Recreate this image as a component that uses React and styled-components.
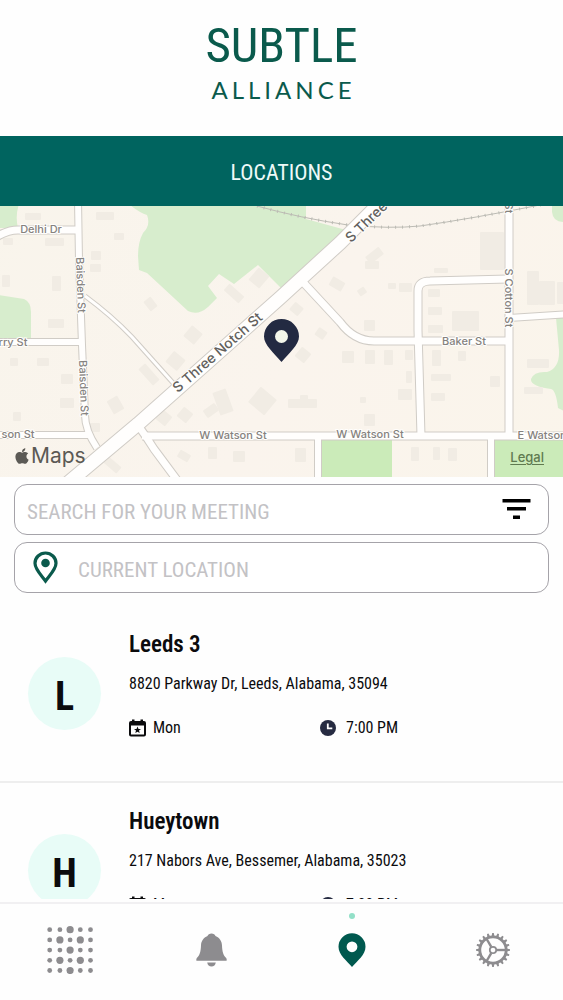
import React from "react";
import styled, { createGlobalStyle, css } from "styled-components";
import { FaApple } from "react-icons/fa";

const GlobalStyle = createGlobalStyle`
  *, *::before, *::after { box-sizing: border-box; }
  body {
    margin: 0;
    background: #fefefe;
    color: #0b0b0d;
    font-family: "Roboto Condensed", "Liberation Sans", sans-serif;
  }
  h1, h2, p, ul { margin: 0; padding: 0; }
  ul { list-style: none; }
`;

const Screen = styled.div`
  display: flex;
  flex-direction: column;
  height: 100vh;
  overflow: hidden;
`;

/* Brand header */
const Brand = styled.header`
  flex: none;
  display: flex;
  flex-direction: column;
  align-items: center;
  height: 136px;
  padding-top: 16px;
  color: #0a5a4c;
`;
const BrandName = styled.p`
  font-size: 49px;
  line-height: 60px;
`;
const BrandSub = styled.p`
  margin-right: -4px;
  font-family: Lato, sans-serif;
  font-size: 24px;
  line-height: 28px;
  letter-spacing: 4px;
`;

const TitleBar = styled.div`
  flex: none;
  display: flex;
  align-items: center;
  justify-content: center;
  height: 70px;
  padding-top: 4px;
  background: #00645f;
  color: #eefaf8;
`;
const Title = styled.h1`
  font-size: 22px;
  line-height: 28px;
  font-weight: 400;
`;

/* Map */
const MapPanel = styled.section`
  flex: none;
  position: relative;
  height: 271px;
  background: #f9f5ec;
`;
const MapArt = styled.svg`
  display: block;
  width: 100%;
  height: 100%;
  font-family: Inter, sans-serif;
`;
const MapBrand = styled.span`
  position: absolute;
  left: 13px;
  bottom: 8px;
  display: flex;
  align-items: center;
  font: 400 21px/26px Inter, sans-serif;
  color: #5c5a55;
`;
const LegalLink = styled.a`
  position: absolute;
  right: 19px;
  bottom: 11px;
  font: 500 13px/18px Inter, sans-serif;
  color: #5f7a50;
  text-underline-offset: 2px;
`;

/* Search fields */
const SearchForm = styled.form`
  flex: none;
  display: flex;
  flex-direction: column;
  gap: 7px;
  padding: 7px 14px 0;
`;
const Field = styled.div`
  display: flex;
  align-items: center;
  height: 51px;
  padding: 0 17px 0 ${(p) => (p.$withIcon ? "18px" : "12px")};
  gap: 20px;
  border: 1px solid #a5a3a9;
  border-radius: 13px;
  background: #fff;
`;
const FieldInput = styled.input`
  flex: 1;
  min-width: 0;
  padding: 4px 0 0;
  border: 0;
  outline: 0;
  background: none;
  color: #0b0b0d;
  font: 400 21px/28px "Roboto Condensed", "Liberation Sans", sans-serif;
  &::placeholder { color: #c3c2c5; opacity: 1; }
`;
const IconButton = styled.button`
  display: flex;
  padding: 0;
  border: 0;
  background: none;
  color: #000;
`;

/* Meeting list */
const MeetingList = styled.ul`
  flex: 1;
  min-height: 0;
  margin-bottom: 3px;
  padding-top: 13px;
  overflow: hidden;
`;
const Meeting = styled.li`
  display: flex;
  align-items: center;
  gap: 28px;
  height: 177px;
  padding: 0 28px;
  border-bottom: 2px solid #eeeeee;
`;
const Avatar = styled.span`
  flex: none;
  display: flex;
  align-items: center;
  justify-content: center;
  width: 73px;
  height: 73px;
  padding-top: 6px;
  border-radius: 50%;
  background: #e8fcf7;
  font-size: 40px;
  line-height: 44px;
  font-weight: 700;
`;
const Details = styled.div`
  flex: 1;
  min-width: 0;
  padding-bottom: 18px;
`;
const MeetingName = styled.h2`
  font-size: 23px;
  line-height: 28px;
  font-weight: 600;
`;
const Address = styled.p`
  margin-top: 14px;
  font-size: 16px;
  line-height: 22px;
`;
const Meta = styled.div`
  display: grid;
  grid-template-columns: 191px 1fr;
  margin-top: 22px;
`;
const MetaItem = styled.span`
  display: flex;
  align-items: center;
  gap: ${(p) => (p.$wide ? "10px" : "7px")};
  font-size: 16px;
  line-height: 22px;
`;

/* Bottom navigation */
const TabBar = styled.nav`
  flex: none;
  display: grid;
  grid-template-columns: repeat(4, 1fr);
  height: 98px;
  border-top: 2px solid #f1f0f2;
`;
const Tab = styled.button`
  position: relative;
  display: flex;
  align-items: center;
  justify-content: center;
  padding: 0 0 4px;
  border: 0;
  background: none;
  color: #8d8c8f;
  ${(p) =>
    p.$active &&
    css`
      color: #00594f;
      &::before {
        content: "";
        position: absolute;
        top: 9px;
        left: 50%;
        width: 6px;
        height: 6px;
        margin-left: -3px;
        border-radius: 50%;
        background: #93e0c8;
      }
    `}
`;

const roads = [
  { d: "M78 200 L79 260 L82 345 L85 415 Q85 430 97 448", w: 6 },
  { d: "M78 230 H18 Q8 230 -4 237", w: 7 },
  { d: "M-4 342 H82", w: 6 },
  { d: "M-4 435 H88", w: 6 },
  { d: "M85 296 Q112 316 132 337 L174 384", w: 3 },
  { d: "M137 424 Q146 436 154 449 L180 484", w: 7 },
  { d: "M142 436 H570", w: 7 },
  { d: "M301 280 L340 322 Q354 341 374 341 H508", w: 7 },
  { d: "M421 436 L418 330 V291 Q418 281 430 281 L508 279", w: 7 },
  { d: "M509 200 V436", w: 7 },
  { d: "M509 318 L570 314", w: 6 },
  { d: "M318 436 V484", w: 6 },
  { d: "M491 436 V484", w: 6 },
  { d: "M50 498 L138 424 L281 297 L340 243 L390 193", w: 13 },
];

const parks = [
  "M130 205 Q140 213 147 215 Q151 225 143 233 Q138 242 138 256 L139 270 L147 273 L188 311 Q198 316 208 307 L217 298 L208 286 L219 274 L234 284 L258 265 L281 288 L346 230 L306 219 V205 Z",
  "M-2 204 H19 Q15 216 18 228 H-2 Z",
  "M-2 295 L24 299 Q31 302 31 312 V339 H-2 Z",
  "M552 204 H566 V222 Q553 223 552 212 Z",
  "M556 318 H566 V412 L558 408 Q556 390 551 389 Q530 386 531 379 Q534 371 547 372 Q560 368 559 350 Z",
];

const buildings = [
  [25, 213, 16, 7], [96, 212, 18, 8], [45, 238, 19, 8], [3, 238, 10, 7], [114, 233, 10, 7], [91, 251, 10, 9],
  [90, 264, 11, 8], [52, 276, 9, 15], [2, 275, 8, 12], [48, 319, 16, 9], [10, 358, 8, 8], [37, 358, 12, 8],
  [61, 374, 12, 10], [60, 398, 14, 10], [13, 412, 8, 9], [365, 261, 14, 8], [434, 268, 14, 5], [399, 283, 13, 9],
  [388, 283, 8, 6], [364, 320, 11, 11], [428, 289, 12, 8], [428, 307, 14, 8], [428, 325, 15, 8], [452, 311, 27, 20],
  [480, 232, 24, 38], [527, 271, 12, 34], [539, 281, 16, 24], [557, 282, 8, 22], [365, 350, 10, 14], [384, 350, 9, 15],
  [342, 351, 12, 12], [405, 350, 8, 10], [406, 371, 6, 12], [398, 389, 14, 11], [432, 350, 9, 16], [458, 351, 8, 10],
  [431, 374, 20, 7], [431, 393, 14, 8], [490, 376, 10, 11], [527, 359, 22, 9], [524, 387, 19, 7], [288, 399, 29, 9],
  [300, 395, 8, 6], [360, 397, 6, 6], [364, 414, 11, 12], [295, 448, 11, 14], [411, 447, 8, 14], [433, 447, 7, 13],
  [448, 448, 9, 13], [208, 447, 9, 12], [233, 451, 12, 11], [90, 423, 10, 9],
];

/* x, y, width, height, angle */
const turned = [
  [224, 289, 20, 9, 42], [252, 270, 14, 16, 40], [146, 298, 9, 12, -38], [186, 328, 14, 14, 40], [168, 354, 15, 14, 40],
  [138, 370, 22, 9, 48], [108, 399, 15, 12, 60], [158, 412, 12, 12, 40], [179, 409, 12, 12, 40], [252, 391, 21, 20, 40],
  [216, 390, 14, 24, -20], [204, 406, 14, 9, -35], [366, 251, 17, 9, -38], [330, 279, 14, 10, 30], [358, 288, 8, 7, -35],
  [291, 304, 11, 10, 40], [297, 349, 12, 12, 40], [316, 329, 10, 9, 35], [104, 461, 17, 8, 40], [178, 452, 12, 8, 30],
];

const labels = [
  { t: "Delhi Dr", x: 41, y: 233 },
  { t: "Baisden St", x: 81, y: 285, r: 88 },
  { t: "Baisden St", x: 84, y: 388, r: 88 },
  { t: "rry St", x: 13, y: 346 },
  { t: "son St", x: 18, y: 438 },
  { t: "W Watson St", x: 233, y: 439 },
  { t: "W Watson St", x: 370, y: 438 },
  { t: "E Watson St", x: 549, y: 439 },
  { t: "Baker St", x: 464, y: 345 },
  { t: "S Cotton St", x: 509, y: 298, r: 90 },
  { t: "St", x: 509, y: 208, r: 90 },
  { t: "S Three Notch St", x: 217, y: 352, r: -41, major: true },
  { t: "S Three Notch St", x: 388, y: 200, r: -44, major: true },
];

const MapDrawing = () => (
  <MapArt viewBox="0 206 563 271" preserveAspectRatio="xMidYMid slice" role="img" aria-label="Street map">
    <defs>
      <linearGradient id="land" x1="0" y1="0" x2="1" y2="0.3">
        <stop offset="0" stopColor="#f8f5eb" />
        <stop offset="0.6" stopColor="#faf4ed" />
        <stop offset="1" stopColor="#faf5ea" />
      </linearGradient>
    </defs>
    <rect x="-200" y="100" width="1000" height="500" fill="url(#land)" />
    {parks.map((d) => <path key={d} d={d} fill="#d7edcd" />)}
    <path d="M322 438 H392 V484 H322 Z M494 438 H570 V484 H494 Z" fill="#cbebb9" />
    <g fill="#f1ece4">
      {buildings.map(([x, y, w, h]) => <rect key={`${x}-${y}`} x={x} y={y} width={w} height={h} rx="1" />)}
      {turned.map(([x, y, w, h, a]) => (
        <rect key={`${x}-${y}`} x={x} y={y} width={w} height={h} rx="1" transform={`rotate(${a} ${x + w / 2} ${y + h / 2})`} />
      ))}
    </g>
    <path d="M257 206 Q300 218 348 225 Q390 229 420 226 Q470 219 545 204" fill="none" stroke="#bcbbb4" strokeWidth="1" />
    <path d="M257 206 Q300 218 348 225 Q390 229 420 226 Q470 219 545 204" fill="none" stroke="#bcbbb4" strokeWidth="3" strokeDasharray="1 6" />
    <g fill="none" stroke="#d0ccc6">
      {roads.map((r) => <path key={r.d} d={r.d} strokeWidth={r.w + 2} />)}
    </g>
    <g fill="none" stroke="#fffefd">
      {roads.map((r) => <path key={r.d} d={r.d} strokeWidth={r.w} />)}
    </g>
    {labels.map((l) => (
      <text
        key={`${l.x}-${l.y}`}
        x={l.x}
        y={l.y}
        textAnchor="middle"
        dominantBaseline={l.r ? "central" : undefined}
        transform={l.r ? `rotate(${l.r} ${l.x} ${l.y})` : undefined}
        fontSize={l.major ? 14 : 11}
        fontWeight={500}
        fill={l.major ? "#62605d" : "#85827f"}
        stroke="#fffefc"
        strokeWidth="2"
        paintOrder="stroke"
      >
        {l.t}
      </text>
    ))}
    <path d="M281.500 362 C274 353 264 345 264 336.500 A17.500 17.500 0 0 1 299 336.500 C299 345 289 353 281.500 362 Z" fill="#232a42" />
    <circle cx="281.500" cy="336.500" r="6.500" fill="#f3f6ea" />
  </MapArt>
);

const FilterIcon = () => (
  <svg width="29" height="21" viewBox="0 0 29 21" aria-hidden="true">
    <path d="M0.500 0H28.500V3.500H0.500Z M5 8H24V11.500H5Z M11 16.500H18V20H11Z" fill="currentColor" />
  </svg>
);

const PinOutline = () => (
  <svg width="25" height="34" viewBox="0 0 25 34" aria-hidden="true">
    <path d="M12.500 30 C9 25 2 18.500 2 12.300 A10.500 10.300 0 0 1 23 12.300 C23 18.500 16 25 12.500 30 Z" fill="none" stroke="#0a5a4c" strokeWidth="3.200" />
    <circle cx="12.500" cy="12" r="4.300" fill="#0a5a4c" />
  </svg>
);

const CalendarStar = () => (
  <svg width="17" height="18" viewBox="0 0 17 18" aria-hidden="true">
    <path
      fillRule="evenodd"
      d="M3 0.500H5.500V2H11.500V0.500H14V2H15A2 2 0 0 1 17 4V15.500A2 2 0 0 1 15 17.500H2A2 2 0 0 1 0 15.500V4A2 2 0 0 1 2 2H3Z M2 6.500V15.500H15V6.500Z"
      fill="#0b0b0d"
    />
    <path d="M8.500 7.500 L9.500 9.900 12 10 10 11.600 10.700 14.100 8.500 12.700 6.300 14.100 7 11.600 5 10 7.500 9.900Z" fill="#0b0b0d" />
  </svg>
);

const ClockIcon = () => (
  <svg width="16" height="16" viewBox="0 0 16 16" aria-hidden="true">
    <circle cx="8" cy="8" r="8" fill="#262b41" />
    <path d="M7.800 3.500V8.400H12.300" fill="none" stroke="#fff" strokeWidth="1.800" />
  </svg>
);

const bigDots = new Set(["2-0", "1-1", "3-1", "2-2", "1-3", "3-3", "2-4"]);
const DotsIcon = () => (
  <svg width="48" height="48" viewBox="0 0 48 48" fill="currentColor" aria-hidden="true">
    {[0, 1, 2, 3, 4].flatMap((x) =>
      [0, 1, 2, 3, 4].map((y) => (
        <circle key={`${x}-${y}`} cx={3.7 + x * 10.2} cy={3.7 + y * 10.2} r={bigDots.has(`${x}-${y}`) ? 3.6 : 2.4} />
      ))
    )}
  </svg>
);

const BellIcon = () => (
  <svg width="31" height="34" viewBox="0 0 31 34" fill="currentColor" aria-hidden="true">
    <path d="M15.500 0.500 C17.500 0.500 19 1.600 19.500 3 C23.500 4.500 25.800 8 26 12.500 C26.200 19 27.500 22.500 30.200 25 Q31 26 30.600 27.700 H0.400 Q0 26 0.800 25 C3.500 22.500 4.800 19 5 12.500 C5.200 8 7.500 4.500 11.500 3 C12 1.600 13.500 0.500 15.500 0.500 Z" />
    <path d="M11.200 29.500 H19.800 C19.400 32 17.800 33.500 15.500 33.500 C13.200 33.500 11.600 32 11.200 29.500 Z" />
  </svg>
);

const PinSolid = () => (
  <svg width="28" height="34" viewBox="0 0 28 34" aria-hidden="true">
    <path
      fillRule="evenodd"
      d="M14 34 C9 28 0.500 22 0.500 13.800 A13.500 13.500 0 0 1 27.500 13.800 C27.500 22 19 28 14 34 Z M14 8.400 A5.400 5.400 0 1 0 14 19.200 A5.400 5.400 0 1 0 14 8.400 Z"
      fill="currentColor"
    />
  </svg>
);

const GearIcon = () => (
  <svg width="34" height="34" viewBox="-17 -17 34 34" fill="none" stroke="currentColor" aria-hidden="true">
    <circle r="13.200" strokeWidth="2.800" />
    {Array.from({ length: 20 }, (_, i) => (
      <path key={i} d="M13.500 -1.500 L17 -0.800 V0.800 L13.500 1.500Z" fill="currentColor" stroke="none" transform={`rotate(${i * 18})`} />
    ))}
    <circle r="3.200" strokeWidth="1.800" />
    {[0, 120, 240].map((a) => (
      <path key={a} d="M3.500 0H13" strokeWidth="2.400" transform={`rotate(${a})`} />
    ))}
  </svg>
);

const meetings = [
  { name: "Leeds 3", address: "8820 Parkway Dr, Leeds, Alabama, 35094", day: "Mon", time: "7:00 PM" },
  { name: "Hueytown", address: "217 Nabors Ave, Bessemer, Alabama, 35023", day: "Mon", time: "7:00 PM" },
];

const tabs = [
  { name: "Home", Icon: DotsIcon },
  { name: "Notifications", Icon: BellIcon },
  { name: "Locations", Icon: PinSolid, active: true },
  { name: "Settings", Icon: GearIcon },
];

export default function App() {
  return (
    <>
      <GlobalStyle />
      <Screen>
        <Brand>
          <BrandName>SUBTLE</BrandName>
          <BrandSub>ALLIANCE</BrandSub>
        </Brand>
        <TitleBar>
          <Title>LOCATIONS</Title>
        </TitleBar>
        <MapPanel>
          <MapDrawing />
          <MapBrand>
            <FaApple size={18} aria-hidden="true" />
            Maps
          </MapBrand>
          <LegalLink href="#legal">Legal</LegalLink>
        </MapPanel>
        <SearchForm onSubmit={(e) => e.preventDefault()}>
          <Field>
            <FieldInput type="text" aria-label="Search for your meeting" placeholder="SEARCH FOR YOUR MEETING" />
            <IconButton type="button" aria-label="Filter">
              <FilterIcon />
            </IconButton>
          </Field>
          <Field $withIcon>
            <PinOutline />
            <FieldInput type="text" aria-label="Current location" placeholder="CURRENT LOCATION" />
          </Field>
        </SearchForm>
        <MeetingList>
          {meetings.map((m) => (
            <Meeting key={m.name}>
              <Avatar aria-hidden="true">{m.name[0]}</Avatar>
              <Details>
                <MeetingName>{m.name}</MeetingName>
                <Address>{m.address}</Address>
                <Meta>
                  <MetaItem>
                    <CalendarStar />
                    {m.day}
                  </MetaItem>
                  <MetaItem $wide>
                    <ClockIcon />
                    {m.time}
                  </MetaItem>
                </Meta>
              </Details>
            </Meeting>
          ))}
        </MeetingList>
        <TabBar>
          {tabs.map(({ name, Icon, active }) => (
            <Tab key={name} type="button" aria-label={name} $active={active}>
              <Icon />
            </Tab>
          ))}
        </TabBar>
      </Screen>
    </>
  );
}
